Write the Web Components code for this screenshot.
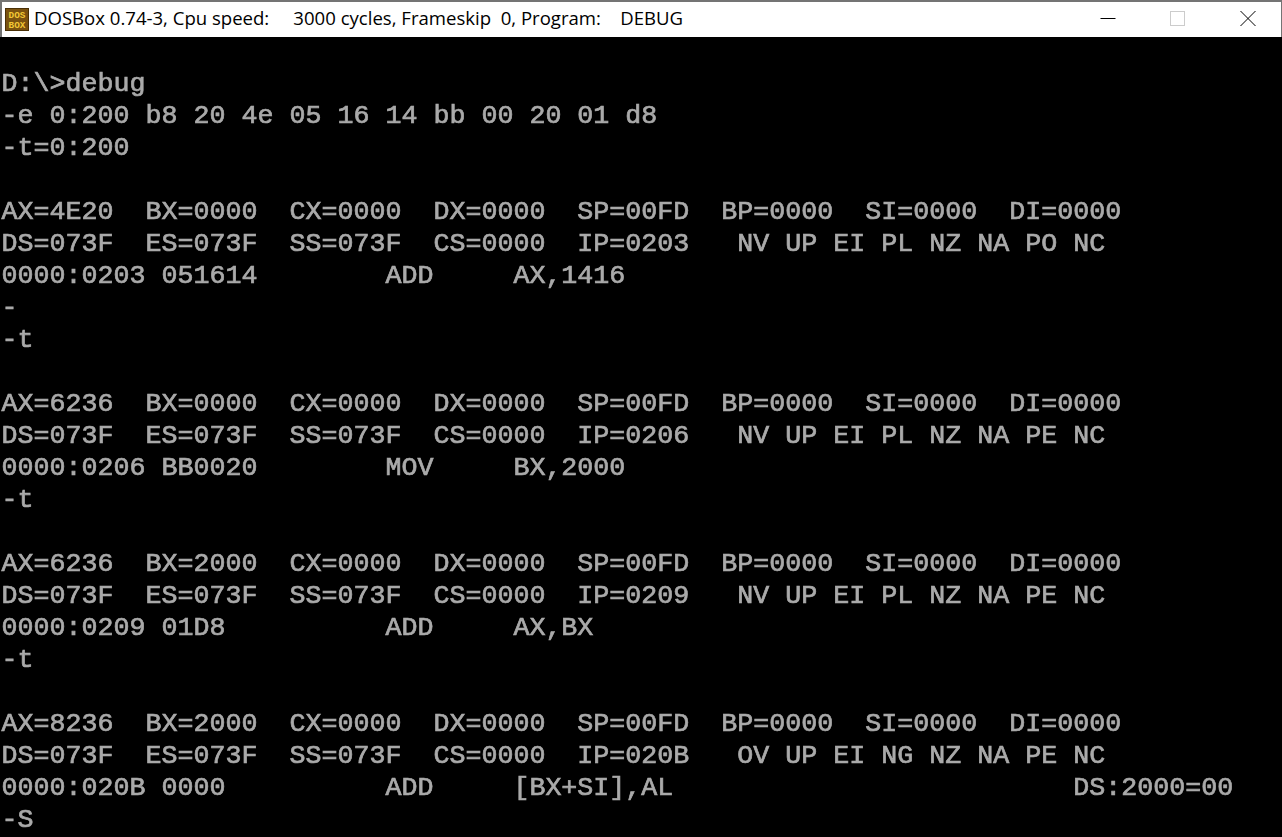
<!DOCTYPE html>
<html lang="en"><head><meta charset="utf-8"><title>DOSBox</title>
<style>html,body{margin:0;padding:0;background:#000;overflow:hidden}</style></head>
<body>
<template id="t-window"><style>
:host{display:flex;flex-direction:column;width:1282px;height:837px;box-sizing:border-box;background:#000;overflow:hidden}
</style><slot></slot></template>

<template id="t-title"><style>
:host{display:flex;align-items:center;height:37px;flex:none;box-sizing:border-box;background:#fff;border:solid #747474;border-width:2px 1px 0 2px;color:#000;font:18.57px "Open Sans","Noto Sans",sans-serif}
.ico{flex:none;width:24px;height:23px;margin:0 5px 0 3px;display:block}
.txt{flex:1;white-space:pre;overflow:hidden;padding-bottom:4px}
.btns{display:flex;flex:none;align-self:flex-start}
.btn{height:34px;display:flex;align-items:center;justify-content:center}
.min{width:63px}.max{width:75px}.cls{width:67px}
.btn svg{display:block;width:16px;height:16px}
</style>
<svg class="ico" viewBox="0 0 24 23"><rect width="24" height="23" fill="#4a3006"/><rect x="1" y="1" width="22" height="21" fill="#7a5210"/>
<text x="12" y="10" text-anchor="middle" font-family="Liberation Mono" font-weight="700" font-size="9.4" fill="#f2c834">DOS</text>
<text x="12" y="20" text-anchor="middle" font-family="Liberation Mono" font-weight="700" font-size="9.4" fill="#f2c834">BOX</text></svg>
<span class="txt"><slot></slot></span>
<span class="btns">
<span class="btn min"><svg viewBox="0 0 16 16"><path d="M0.5 7.5H15.5" stroke="#000" fill="none"/></svg></span>
<span class="btn max"><svg viewBox="0 0 16 16"><rect x="1.5" y="0.5" width="14" height="14" stroke="#ccc" fill="none"/></svg></span>
<span class="btn cls"><svg viewBox="0 0 16 16"><path d="M0.5 0L15.5 15M15.5 0L0.5 15" stroke="#000" fill="none"/></svg></span>
</span></template>

<template id="t-screen"><style>
:host{display:block;flex:1;background:#000;color:#aaa;padding-left:1.5px;font:400 26.66px/30px "Liberation Mono",monospace;-webkit-text-stroke:.7px #aaa;filter:blur(.3px)}
</style><slot></slot></template>

<template id="t-row"><style>
:host{display:block;height:32px;white-space:pre;line-height:30px}
</style><slot></slot></template>

<dos-window>
<dos-titlebar>DOSBox 0.74-3, Cpu speed:     3000 cycles, Frameskip  0, Program:    DEBUG</dos-titlebar>
<dos-screen>
<dos-row></dos-row>
<dos-row>D:\&gt;debug</dos-row>
<dos-row>-e 0:200 b8 20 4e 05 16 14 bb 00 20 01 d8</dos-row>
<dos-row>-t=0:200</dos-row>
<dos-row></dos-row>
<dos-row>AX=4E20  BX=0000  CX=0000  DX=0000  SP=00FD  BP=0000  SI=0000  DI=0000</dos-row>
<dos-row>DS=073F  ES=073F  SS=073F  CS=0000  IP=0203   NV UP EI PL NZ NA PO NC</dos-row>
<dos-row>0000:0203 051614        ADD     AX,1416</dos-row>
<dos-row>-</dos-row>
<dos-row>-t</dos-row>
<dos-row></dos-row>
<dos-row>AX=6236  BX=0000  CX=0000  DX=0000  SP=00FD  BP=0000  SI=0000  DI=0000</dos-row>
<dos-row>DS=073F  ES=073F  SS=073F  CS=0000  IP=0206   NV UP EI PL NZ NA PE NC</dos-row>
<dos-row>0000:0206 BB0020        MOV     BX,2000</dos-row>
<dos-row>-t</dos-row>
<dos-row></dos-row>
<dos-row>AX=6236  BX=2000  CX=0000  DX=0000  SP=00FD  BP=0000  SI=0000  DI=0000</dos-row>
<dos-row>DS=073F  ES=073F  SS=073F  CS=0000  IP=0209   NV UP EI PL NZ NA PE NC</dos-row>
<dos-row>0000:0209 01D8          ADD     AX,BX</dos-row>
<dos-row>-t</dos-row>
<dos-row></dos-row>
<dos-row>AX=8236  BX=2000  CX=0000  DX=0000  SP=00FD  BP=0000  SI=0000  DI=0000</dos-row>
<dos-row>DS=073F  ES=073F  SS=073F  CS=0000  IP=020B   OV UP EI NG NZ NA PE NC</dos-row>
<dos-row>0000:020B 0000          ADD     [BX+SI],AL                         DS:2000=00</dos-row>
<dos-row>-S</dos-row>
</dos-screen>
</dos-window>
<script>
const reg=(name,id)=>customElements.define(name,class extends HTMLElement{
  constructor(){super();this.attachShadow({mode:'open'}).appendChild(document.getElementById(id).content.cloneNode(true));}
});
reg('dos-window','t-window');reg('dos-titlebar','t-title');reg('dos-screen','t-screen');reg('dos-row','t-row');
</script>
</body></html>
